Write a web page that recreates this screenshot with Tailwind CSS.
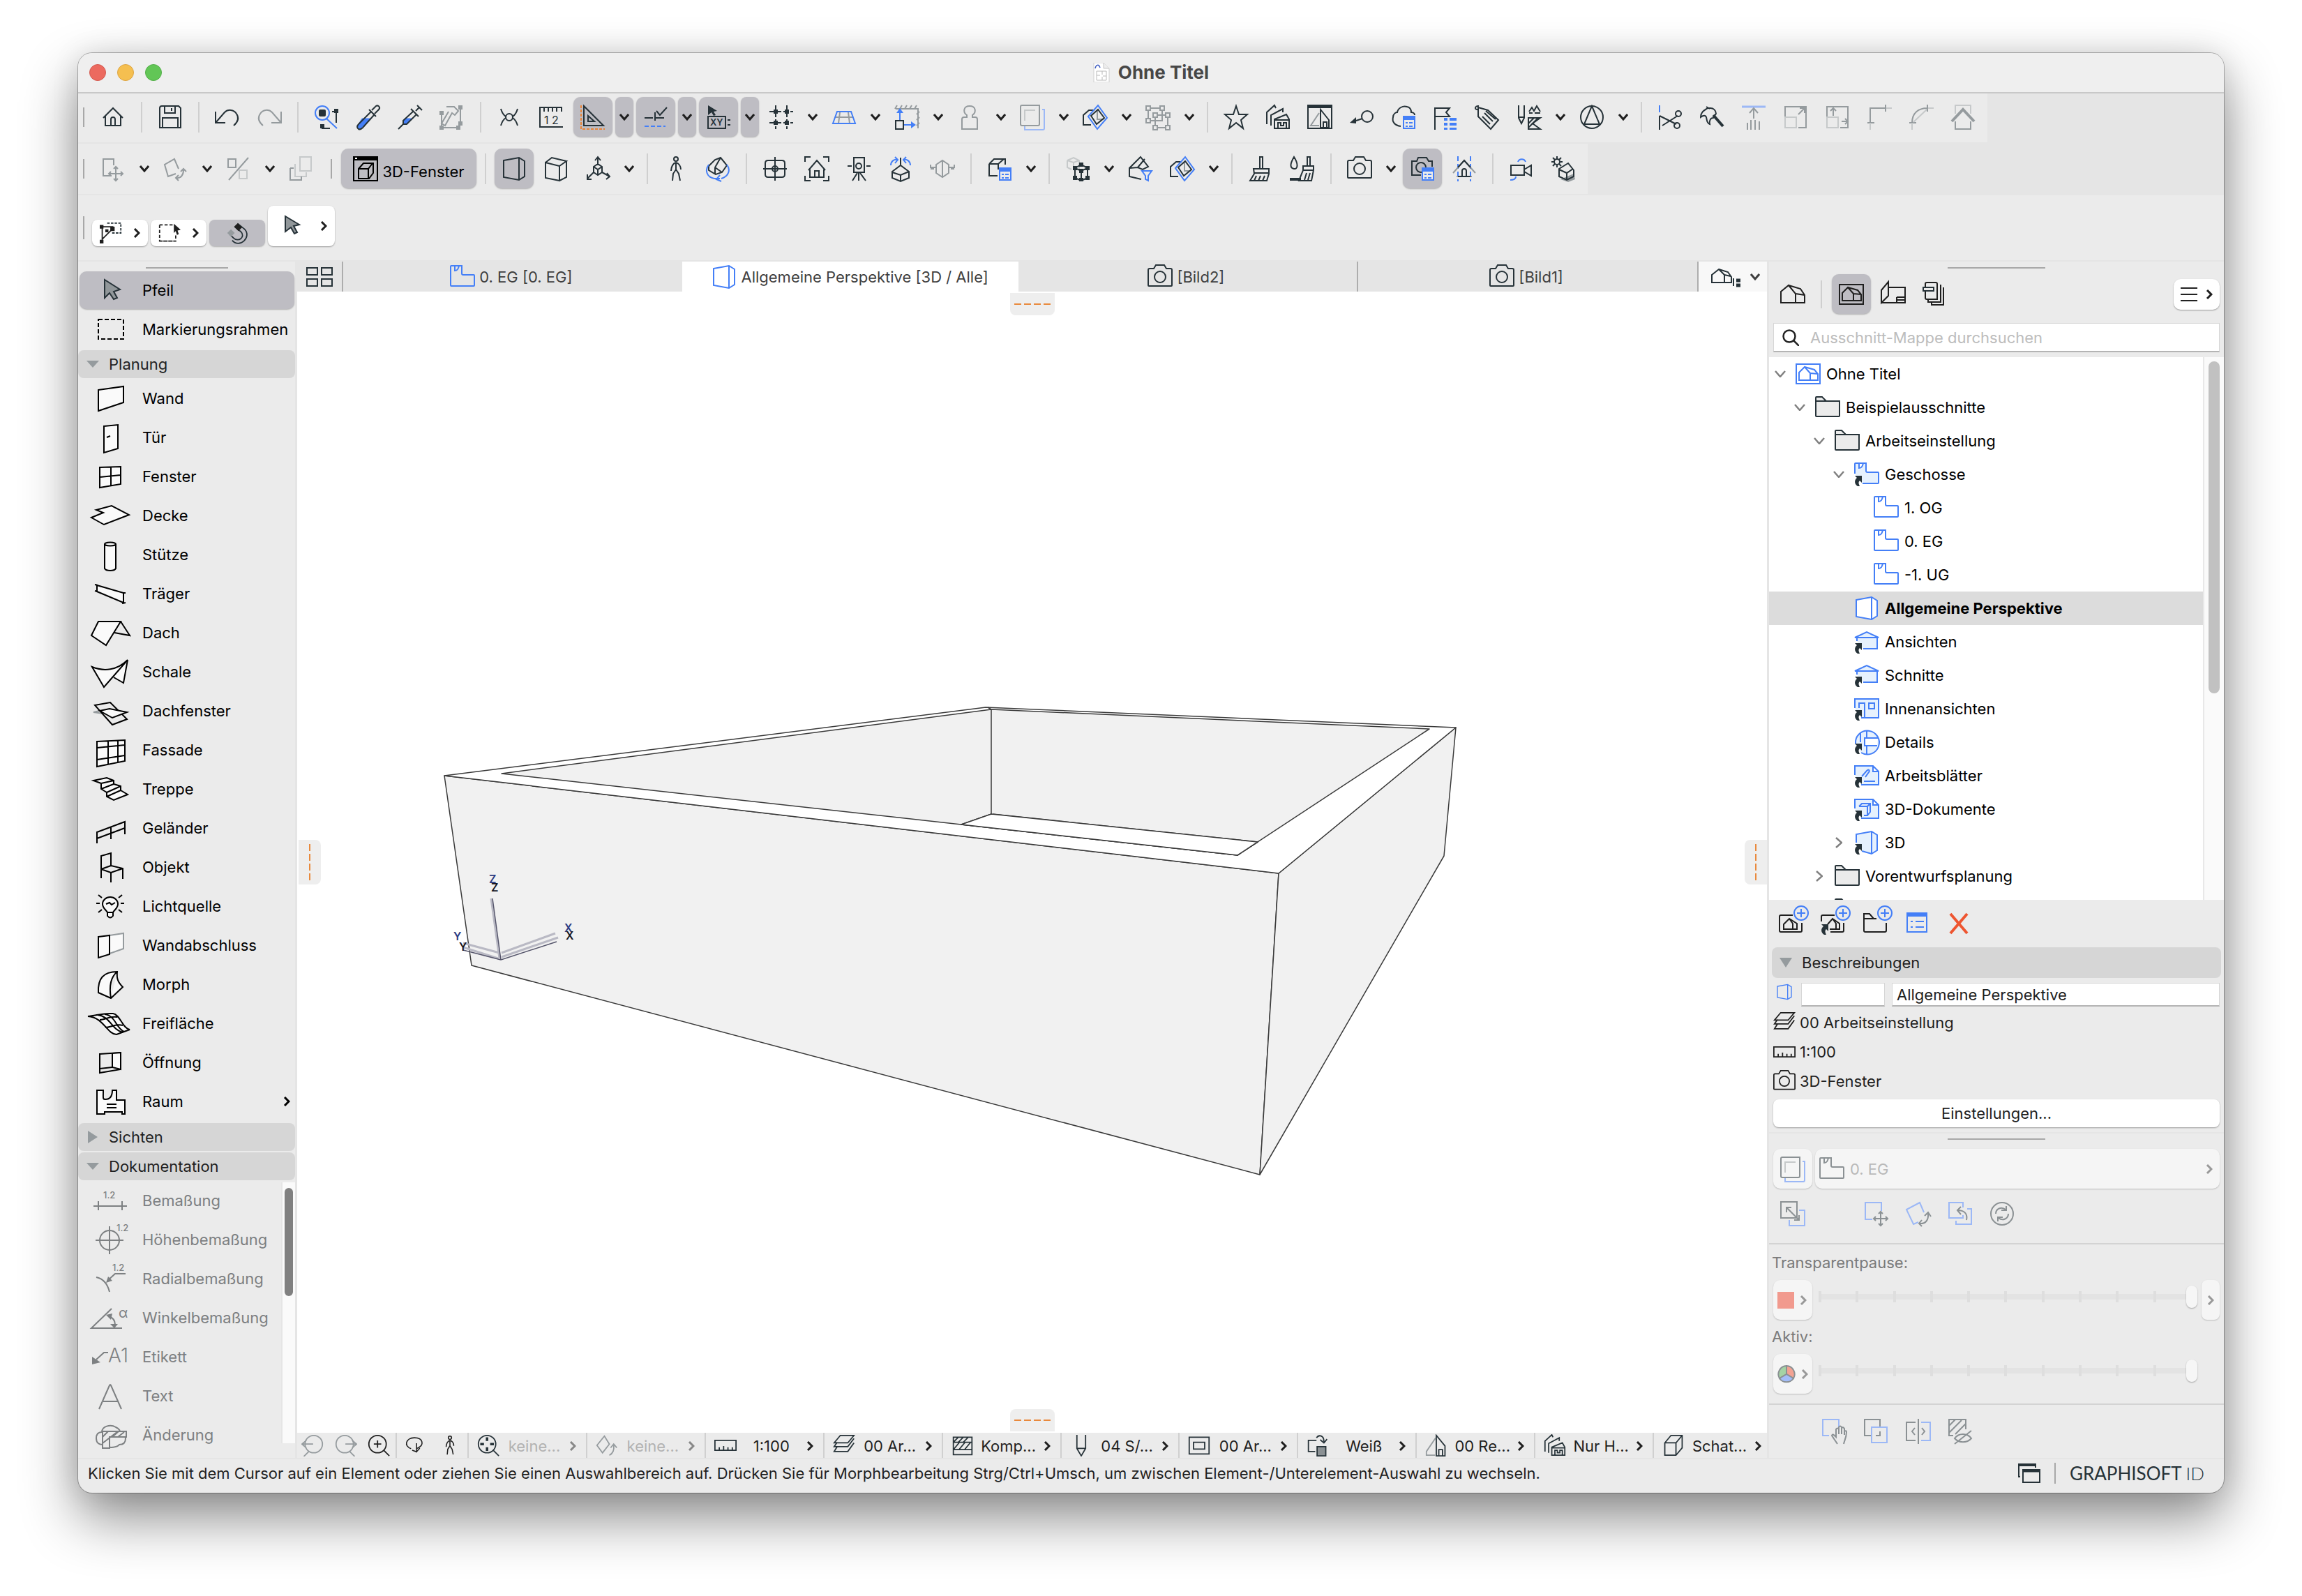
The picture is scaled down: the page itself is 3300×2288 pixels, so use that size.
<!DOCTYPE html>
<html lang="de">
<head>
<meta charset="utf-8">
<title>Ohne Titel</title>
<script src="https://cdn.jsdelivr.net/npm/@tailwindcss/browser@4"></script>
</head>
<body class="bg-white font-['Inter',sans-serif] text-[22px] leading-7 text-[#1f1f1f]">
<div class="min-h-screen px-28 pt-[76px] pb-[148px]">
<div class="flex flex-col overflow-hidden rounded-[20px] bg-[#ebebeb] shadow-[0_0_0_1px_rgba(0,0,0,0.28),0_36px_80px_rgba(0,0,0,0.46),0_0_40px_rgba(0,0,0,0.1)]">

  <header class="grid h-[58px] grid-cols-[1fr_auto_1fr] items-center border-b-2 border-[#c8c8c8] bg-[#efefef] px-4">
    <div class="flex gap-4">
      <button aria-label="Schließen" class="size-6 rounded-full border border-[#d35a50] bg-[#ec6a5f]"></button>
      <button aria-label="Minimieren" class="size-6 rounded-full border border-[#dca443] bg-[#f5bf50]"></button>
      <button aria-label="Vergrößern" class="size-6 rounded-full border border-[#53ae49] bg-[#62c656]"></button>
    </div>
    <h1 class="flex items-center gap-3 text-[26px] font-bold text-[#474747]">
      <svg class="h-7 w-6" viewBox="0 0 24 28" fill="none"><path d="M1 0h14l8 8v20H1z" fill="#fff" stroke="#cfcfcf"/><path d="M15 0v8h8" fill="#eee" stroke="#c4c4c4"/><path d="M3 8c1-5 5-7 7-1" stroke="#3c5bc0" stroke-width="1.5"/><path d="M5 12h14v13H5zM5 18h5m3-6v5m0 3v5m1-6h5" stroke="#b9b9b9"/></svg>
      Ohne Titel</h1>
  </header>

  <div class="flex flex-col items-start gap-0.5 bg-[#e5e5e5] pb-0.5">
    <div id="bar-main" role="toolbar" class="flex gap-1 bg-[#ebebeb] pt-[5px] pr-[7px] pb-2 pl-[7px]"></div>
    <div id="bar-3d" role="toolbar" class="flex gap-1 bg-[#ebebeb] pt-[7px] pr-[7px] pb-2 pl-[7px]"></div>
  </div>

  <div id="bar-info" class="flex h-[95px] items-end gap-1 border-b-2 border-[#e5e5e5] pb-5 pl-[7px]"></div>

  <div class="flex">
    <nav class="flex w-[314px] shrink-0 flex-col border-r-[3px] border-[#e5e5e5]">
      <div class="mx-auto mt-2 mb-1 h-0.5 w-[118px] bg-[#a8a8a8]"></div>
      <div id="tools-select"></div>
      <button class="mt-0.5 mb-px flex h-10 items-center gap-3.5 rounded-lg bg-[#d6d6d6] pl-3"><svg class="h-2.5 w-[18px]" viewBox="0 0 18 10"><path d="M0 0h18l-9 10z" fill="#959b9e"/></svg>Planung</button>
      <div id="tools-plan"></div>
      <button class="mt-[3px] flex h-10 items-center gap-3.5 rounded-lg bg-[#d6d6d6] pl-3"><svg class="h-[18px] w-[18px]" viewBox="0 0 18 18"><path d="M2 0l14 9-14 9z" fill="#959b9e"/></svg>Sichten</button>
      <button class="mt-0.5 mb-px flex h-10 items-center gap-3.5 rounded-lg bg-[#d6d6d6] pl-3"><svg class="h-2.5 w-[18px]" viewBox="0 0 18 10"><path d="M0 0h18l-9 10z" fill="#959b9e"/></svg>Dokumentation</button>
      <div class="flex pb-[5px]">
        <div id="tools-doc" class="min-w-0 flex-1"></div>
        <div class="mt-0.5 mb-4 w-5 border-l-2 border-[#e5e5e5] bg-[#fafafa] px-[3px] pt-2"><div class="h-[155px] w-3 rounded-full bg-[#808080]"></div></div>
      </div>
    </nav>

    <main class="flex min-w-0 flex-1 flex-col bg-white">
      <div class="flex h-[43px] bg-[#e5e5e5] text-[#3f3f3f]">
        <button aria-label="Tab-Übersicht" class="flex w-[66px] shrink-0 items-center justify-center border-r-2 border-[#adadad]"><svg class="h-7 w-10" viewBox="0 0 40 28" fill="none" stroke="#263238" stroke-width="2"><path d="M2 1h15v10H2zM23 1h15v10H23zM2 17h15v10H2zM23 17h15v10H23z"/></svg></button>
        <div id="tabs" role="tablist" class="flex min-w-0 flex-1"></div>
        <button aria-label="Tab-Optionen" class="flex w-[100px] shrink-0 items-center justify-center gap-3 border-l-2 border-[#adadad] bg-[#f8f8f8] pl-2" id="tab-menu"></button>
      </div>
      <div class="relative flex-1 overflow-hidden">
        <svg class="absolute inset-0 h-full w-full" viewBox="426 418 2107 1636" fill="#f1f1f1" stroke="#3a3a3a" stroke-width="1.5" stroke-linejoin="round">
          <path d="M637 1112L1833 1252 1806 1684 676 1384z"/>
          <path d="M1833 1252L2087 1043 2070 1227 1806 1684z"/>
          <path d="M637 1112L1413 1014 2087 1043 1833 1252z" fill="#fff"/>
          <path d="M719 1109L1421 1017 2049 1045 1774 1226z"/>
          <path d="M1421 1017V1167L1378 1182 1774 1226 1803 1207 1423 1167" fill="#f1f1f1"/>
          <path d="M1421 1167L1378 1182 1774 1226 1803 1207z" fill="#fff"/>
          <path d="M1421 1017L1416 1014" fill="none"/>
          <g fill="none" stroke="#b9b9c4" stroke-width="3"><path d="M716 1374L704 1288M719 1372L800 1344M719 1366L796 1338M714 1374L664 1358M716 1366L664 1352"/></g>
          <g fill="none" stroke="#55556b" stroke-width="1.5"><path d="M718 1376L706 1288M718 1376L798 1350M718 1376L664 1362"/></g>
          <g stroke="none" font-size="16" font-weight="600"><g fill="#2b3a80"><text x="701" y="1266">Z</text><text x="809" y="1336">X</text><text x="650" y="1348">Y</text></g><g fill="#15151f"><text x="704" y="1278">Z</text><text x="811" y="1347">X</text><text x="658" y="1363">Y</text></g></g>
        </svg>
        <div class="absolute top-0.5 left-1/2 flex h-8 w-16 -translate-x-1/2 items-center justify-center gap-1 rounded-b-lg bg-[#eee]" data-handle="h"></div>
        <div class="absolute bottom-0.5 left-1/2 flex h-8 w-16 -translate-x-1/2 items-center justify-center gap-1 rounded-t-lg bg-[#eee]" data-handle="h"></div>
        <div class="absolute top-1/2 left-0.5 flex h-16 w-8 -translate-y-1/2 flex-col items-center justify-center gap-1 rounded-r-lg bg-[#eee]" data-handle="v"></div>
        <div class="absolute top-1/2 right-0 flex h-16 w-8 -translate-y-1/2 flex-col items-center justify-center gap-1 rounded-l-lg bg-[#eee]" data-handle="v"></div>
      </div>
      <div id="quick" class="flex h-9 bg-[#ebebeb]"></div>
    </main>

    <aside class="flex w-[655px] shrink-0 flex-col border-l-[3px] border-[#e5e5e5]">
      <div class="mx-auto mt-2 h-0.5 w-[140px] bg-[#a8a8a8]"></div>
      <div id="nav-head" class="mt-2 flex h-[57px] items-center gap-1 pr-1.5 pl-1.5"></div>
      <label class="mx-1.5 mt-[13px] flex h-[42px] items-center gap-4 border border-b-2 border-[#d6d6d6] border-b-[#b4b4b4] bg-white pl-3">
        <svg class="size-6" viewBox="0 0 24 24" fill="none" stroke="#222" stroke-width="2.5"><circle cx="10" cy="10" r="8.5"/><path d="M16 16l8 8"/></svg>
        <input type="search" aria-label="Ausschnitt-Mappe durchsuchen" placeholder="Ausschnitt-Mappe durchsuchen" class="min-w-0 flex-1 bg-transparent outline-none placeholder:text-[#bdbdbd]">
      </label>
      <div class="mt-[7px] flex h-[778px]">
        <div id="tree" role="tree" class="min-w-0 flex-1 overflow-hidden bg-white text-black"></div>
        <div class="w-[30px] border-l-2 border-[#e8e8e8] bg-[#fafafa] px-1.5 pt-1.5"><div class="h-[476px] w-4 rounded-full bg-[#c1c1c1]"></div></div>
      </div>
      <div id="nav-tools" class="flex h-[66px] items-center pl-0.5"></div>
      <button class="mx-1 mt-0.5 flex h-11 items-center gap-3.5 rounded-lg bg-[#d6d6d6] pl-[11px]"><svg class="h-3.5 w-[18px]" viewBox="0 0 18 14"><path d="M0 0h18l-9 14z" fill="#959b9e"/></svg>Beschreibungen</button>
      <div class="mx-1.5 mt-[7px] flex h-[34px] items-center gap-2.5">
        <span data-icon="persp" class="w-[30px] pb-2 pl-1 text-[#447ff7] [&>svg]:size-6"></span>
        <input aria-label="Kennung" class="h-full w-[120px] border border-b-2 border-[#d6d6d6] border-b-[#b4b4b4] bg-white px-1.5">
        <input aria-label="Name" value="Allgemeine Perspektive" class="h-full min-w-0 flex-1 border border-b-2 border-[#d6d6d6] border-b-[#b4b4b4] bg-white px-1.5">
      </div>
      <div class="mt-0.5 pl-1.5">
        <div class="flex h-[42px] items-center gap-1.5"><span data-icon="layers" class="[&>svg]:size-8"></span>00 Arbeitseinstellung</div>
        <div class="flex h-[42px] items-center gap-1.5"><span data-icon="ruler" class="[&>svg]:size-8"></span>1:100</div>
        <div class="flex h-[42px] items-center gap-1.5"><span data-icon="camera" class="[&>svg]:size-8"></span>3D-Fenster</div>
      </div>
      <button class="mx-1.5 mt-[5px] h-10 rounded-lg bg-white shadow-[0_1px_2px_rgba(0,0,0,0.35)]">Einstellungen...</button>
      <div class="mt-[7px] h-0.5 bg-[#e5e5e5]"></div>
      <div class="mx-auto mt-[7px] h-0.5 w-[140px] bg-[#a8a8a8]"></div>
      <div class="mx-1.5 mt-[13px] flex h-[57px] gap-1">
        <button disabled aria-label="Transparentpause" class="flex w-14 items-center justify-center rounded-[10px] bg-[#f5f5f5] shadow-[0_1px_2px_rgba(0,0,0,0.2)]" data-icon="trace"></button>
        <label class="flex flex-1 items-center gap-2 rounded-[10px] bg-[#f5f5f5] pr-2.5 pl-1.5 text-[#8b9194] shadow-[0_1px_2px_rgba(0,0,0,0.2)]"><span data-icon="storey"></span>
          <select disabled aria-label="Referenz" class="flex-1 appearance-none text-[#b9b9b9]"><option>0. EG</option></select><span data-chev="r" class="text-[#999]"></span></label>
      </div>
      <div id="trace-tools" class="flex h-[72px] items-center pl-1 text-[#8b9194]"></div>
      <div class="mt-1.5 h-0.5 bg-[#d3d3d3]"></div>
      <div id="sliders" class="mt-2"></div>
      <div class="mt-3.5 h-0.5 bg-[#d3d3d3]"></div>
      <div id="trace-foot" class="flex h-[76px] items-center pl-16 text-[#8b9194]"></div>
    </aside>
  </div>

  <footer class="flex h-[50px] items-center border-t-2 border-[#e5e5e5] pr-7 pl-3.5">
    <p class="flex-1 pb-2">Klicken Sie mit dem Cursor auf ein Element oder ziehen Sie einen Auswahlbereich auf. Drücken Sie für Morphbearbeitung Strg/Ctrl+Umsch, um zwischen Element-/Unterelement-Auswahl zu wechseln.</p>
    <div class="flex items-center gap-5 pb-2">
      <svg class="h-7 w-8" viewBox="0 0 32 28" fill="none" stroke="#263238" stroke-width="2"><path d="M3 19H1V1h24v5"/><path d="M1 2.5h24" stroke-width="3"/><path d="M7 9h24v18H7z"/><path d="M7 10.500h24" stroke-width="4"/></svg>
      <div class="h-[30px] w-0.5 bg-[#a8a8a8]"></div>
      <a href="#" class="font-['Lato',sans-serif] text-[26px] text-[#263238]">GRAPHISOFT <span class="font-light">ID</span></a>
    </div>
  </footer>
</div>
</div>

<script>
const K = '#263238', G = '#959b9e', L = '#c6c9ca', B = '#447ff7', LB = '#9cb8f6', O = '#ea8437', C = 'currentColor', W = '#fafafa', F = '#e6f1fd';
const p = (d, s = C, f = 'none', w = 2) => `<path d="${d}" stroke="${s}" fill="${f}" stroke-width="${w}"/>`;
const circ = (x, y, r, s = C, f = 'none') => `<circle cx="${x}" cy="${y}" r="${r}" stroke="${s}" fill="${f}" stroke-width="2"/>`;
const solid = (d, f = C) => p(d, 'none', f);
const txt = (x, y, size, t, w = 500) => `<text x="${x}" y="${y}" font-size="${size}" font-weight="${w}" fill="currentColor">${t}</text>`;
const shortcut = solid('M5 35c-5-3-5-9-1-12l-3-3h10v10l-3-3c-2 2-2 4 0 8z', K);
const listBadge = p('M18 17h16v17H18z', B, '#ebebeb') + solid('M18 16h16v6H18z', B) + p('M21 26h3m2 0h5M21 31h3m2 0h5', B);
const plus = circ(32, 4, 10, B, '#ebebeb') + p('M32-2v12M26 4h12', B);

const icons = {
  home: p('M4 19L18 5l14 14M7 16v14h22V16M15 30v-9a3 3 0 0 1 6 0v9'),
  save: p('M3 5q0-3 3-3h24l3 3v28H3zM10 3v9h15V3M20 5v4M7 33V19h22v14'),
  undo: p('M1 10v16h14M1 26L14 11a11 11 0 0 1 17 2c4 6 2 12-4 17'),
  redo: p('M35 10v16H21M35 26L22 11a11 11 0 0 0-17 2c-4 6-2 12 4 17', G),
  find: circ(12, 12, 10, B) + p('M18 20l15 14', B) + solid('M7 9q0-2 2-2h6q2 0 2 2v6q0 2-2 2H9q-2 0-2-2z', K) + p('M26 10h6M32 9v17M12 29v5h11', K) + solid('M29 6h6v6h-6zM9 28h6v6H9z', K),
  dropper: p('M9 20h12L8 33c-2 2-6 1-6-2z', B, B, 1) + p('M23 8l6-6c3-2 7 2 4 5l-6 6M19 7l10 10M22 10L4 28c-3 3-2 6 0 7s4 0 6-2l16-18'),
  syringe: p('M10 20h11l-8 8H8v-5z', B, B, 1) + p('M28 1l7 7M31 4l-5 5M19 6l11 11M23 9L8 23v5h5l14-14M8 28l-7 7'),
  hammer: p('M10 3h11l6 6-5 6-4-3-10 18-5-3 10-17M30 3v27M3 12v21h26', G) + solid('M27 1h6v6h-6zM27 24h6v6h-6zM0 9h6v6H0zM0 30h6v6H0zM24 30h6v6h-6z', G),
  snap: p('M6 6c2 7 4 9 7 11M30 6c-2 7-4 9-7 11M6 30c2-7 4-9 7-11M30 30c-2-7-4-9-7-11') + circ(18, 18, 5),
  ruler12: p('M2 32V4h32M35 32H1M8 4v6M14 4v6M20 4v6M26 4v6M33 4v6') + `<text x="8" y="28" font-size="16" fill="${K}">1 2</text>`,
  setsq: p('M5 2v28h28zM11 16v8h9z') + p('M1 1v34h34', O).replace('/>', ' stroke-dasharray="4 2"/>'),
  guide: p('M2 19h12m4 0h12M17 11v12M19 9l5 6L34 4') + p('M2 31h30', B).replace('/>', ' stroke-dasharray="6 3"/>'),
  track: p('M3 17h25v17H3zM31 22h4M31 29h4') + solid('M3 1l13 8-5 1 3 5-3 1-3-5-5 4z') + `<text x="6" y="30" font-size="13" font-weight="600" fill="${K}">XY</text>`,
  grid: p('M10 1v34M26 1v34M1 10h34M1 26h34').replace('/>', ' stroke-dasharray="7 3"/>') + solid('M7 7h6v6H7zM23 7h6v6h-6zM7 23h6v6H7zM23 23h6v6h-6z'),
  skew: p('M12 11l-2 16M24 11l2 16M6 18h24', G) + p('M8 10h20l6 17H2z', B),
  measure: p('M2 6h32v28', G) + p('M4 1l-3 5M11 1L8 6M18 1l-3 5M25 1l-3 5M32 1l-3 5M36 10l-4 4M36 18l-4 4M36 26l-4 4', G) + p('M2 23h11v12H2z', K) + p('M8 22V10M14 29h12', B) + solid('M3 12l5-7 5 7zM24 24l7 5-7 5z', B),
  stamp: p('M14 15c-6-4-5-13 4-13s10 9 4 13v3h4q3 0 3 3v14H7V21q0-3 3-3h4z', G),
  ref: p('M1 3q0-2 2-2h25v27q0 2-2 2H3q-2 0-2-2z', G) + p('M7 23V8h15', L) + p('M32 7h3v27q0 2-2 2H7v-5', LB),
  trace: p('M1 3q0-2 2-2h25v27q0 2-2 2H3q-2 0-2-2z', '#8b9194') + p('M7 23V8h15', L) + p('M32 7h3v27q0 2-2 2H7v-5', LB),
  cut3d: p('M21 8v13h9', G) + p('M12 29H1V15L9 8h8') + p('M12 16L22 7l9 12-11 9z') + p('M8 17L22 1l13 18-14 16z', B),
  group: p('M4 5h20v18H4z', G) + p('M14 15h18v18H14z', G) + p('M1 2h6v6H1zM21 2h6v6h-6zM1 20h6v6H1zM11 12h6v6h-6zM29 12h6v6h-6zM11 30h6v6h-6zM29 30h6v6h-6z', G, '#ebebeb'),
  star: p('M18 2l4 12h12l-9 8 3 12-10-8-10 8 3-12-9-8h12z'),
  hoods: p('M2 28V11L13 1l2 4M8 30V15L25 6v5M13 34V21l17-7 4 7v13zM13 22h21M18 34v-8h4v4h4v-4h4v8'),
  elev: p('M1 2h34v32H1z') + solid('M0 0h36v5H0z') + p('M19 7v26h12V22z') + p('M17 12L5 30h12', G) + p('M23 33v-8h5v8'),
  marker: circ(26, 17, 8) + p('M19 20L4 25') + solid('M1 26l9-8 0 9z'),
  cloud: p('M14 31C6 30 1 25 3 18c0-5 4-7 6-7 1-6 8-10 14-8 5 1 6 5 6 8 3 0 5 2 5 4') + listBadge,
  flag: p('M3 36V5h21l-5 6 5 6H3') + solid('M16 19h5v4h-5zM24 19h10v4H24zM16 26h5v4h-5zM24 26h10v4H24zM16 33h5v3h-5zM24 33h10v3H24z', B),
  tag: p('M5 4l14 4 15 14-11 13L5 17zM5 7C-1 8 0 1 6 2M14 12l12 12M11 17l11 11M16 9l14 12'),
  penset: p('M3 1v18l4 8 4-8V1M3 18h8M18 10l4-6 3 5 4-7 5 8M18 12h5m3 0h8') + p('M17 35V19h17l-11 8 11 8z') + p('M17 27l8-8M17 33l14-14'),
  north: circ(18, 18, 16) + p('M18 2L7 28h22z'),
  scissor: p('M3 1v10', B) + p('M3 16v20M3 16l24 12M7 30l22-14') + circ(30, 13, 4) + circ(28, 30, 4),
  axe: p('M12 5c-6 4-10 6-10 13 4-3 7-3 8 0s0 8 5 10c-1-5 1-9 5-9l4-6c0-5-4-8-8-8zM10 3l5 3') + p('M20 15l14 16', K, 'none', 4),
  lift: p('M1 3h34', LB, 'none', 3) + p('M18 20V6M12 12l6-7 6 7M9 26v10M14 22v14M20 22v14M26 24v12', G),
  resize: p('M3 17V3h30v30H22M22 14l8-8M24 5h7v7', G) + p('M3 18h16v15H3z', L),
  stretch: p('M3 17V3h30v30H22M12 16V5M8 9l4-4 4 4M24 24h9M29 20l4 4-4 4', G) + p('M3 18h16v15H3z', L),
  corner: p('M5 26V5h22M27 0v10M1 26h10', G) + p('M5 28v8M28 5h8', L),
  fillet: p('M5 26C5 12 14 5 27 5M27 0v10M1 26h10', G) + p('M5 28v8M28 5h8M7 25L26 7', L),
  roof: p('M7 24v11h22V24', G) + p('M7 13V1h22v12', L) + p('M2 24L18 7l16 17', G, 'none', 4),

  move: p('M16 28H4V4h15v9', G) + p('M22 15v20M12 25h20M19 18l3-3 3 3M19 32l3 3 3-3M15 22l-3 3 3 3M29 22l3 3-3 3', G),
  rotate: p('M18 25l-11 4L2 12 16 4l6 14', G) + p('M19 31c6 1 10-4 10-11M25 22l4-4 4 4M22 27l-4 4 4 4', G),
  scale: p('M3 4h11v12H3zM32 2L4 34', G) + p('M19 20h11v12H19z', L),
  copies: p('M16 1h16v20H16z', L) + p('M10 12h-1v17h16v-6', L) + p('M2 17v17h16v-5M2 17h5', G),
  win3d: p('M1 1h34v34H1z') + solid('M0 0h36v6H0z') + solid('M3 2h3v2H3z', '#fff') + p('M8 18l7-8h14v14l-6 8H8zM8 18h14v13M22 18l6-8'),
  persp: p('M3 6L25 2l8 5v22l-8 5L3 30zM25 2v32'),
  axon: p('M3 9v22l20 4V14zM3 9l9-7 21 5-10 7M23 35l10-5V7'),
  axes: p('M18 2v10M14 6l4-5 4 5M12 15l6-4 6 4v8l-6 4-6-4zM12 15l6 4 6-4M18 19v8M12 23L3 32M3 26v7h6M24 23l11 6M30 33l5-4-4-5'),
  walk: circ(18, 4, 3) + p('M18 9c-4 1-7 6-7 12M18 9c4 1 7 5 7 10M18 9v10l-4 6-1 10M18 19l4 6 2 10'),
  orbit: p('M5 14l9-9 8-3 9 11-7 10-9 3-10-6zM14 16l8-14M14 16l10 7M14 16v10') + p('M5 12c-6 8-3 18 8 20h8M31 12c6 8 2 17-8 20M21 27l-5 6 7 3', B),
  compass: p('M18 1v34M1 18h34M4 10q0-4 4-4h20q4 0 4 4v16q0 4-4 4H8q-4 0-4-4z') + circ(18, 18, 4),
  fit: p('M1 8V1h8M27 1h8v7M35 28v7h-8M9 35H1v-7M6 20L18 6l12 14M8 17v13h20V17M15 30v-9h6v9'),
  tripod: p('M11 2h15v21H11zM2 14h6M29 14h6M18 23v12M16 24L9 35M20 24l8 11') + circ(18, 14, 4),
  fly: p('M6 22l12-9 12 9v9l-12 5-12-5zM6 23l12 4 12-5M18 27v8') + p('M4 13c0-6 5-9 9-8M10 1l4 4-4 5M32 13c0-6-5-9-9-8M26 1l-4 4 4 5', B) + p('M18 2v10'),
  clip: p('M9 12l9-6 9 6v12l-9 6-9-6zM18 6v24M1 12v4h7M35 12v4h-7M1 18h5M35 18h-5', G),
  boxlist: p('M3 11l7-7h16v8M3 11v17h12M3 11h13l8-7M16 11v8') + listBadge,
  structs: p('M3 6l9-4 8 4v12M3 6v10l6 3M3 6l9 3 8-3M12 9v6', L) + p('M14 17l9-5 9 5v14l-9 4-9-4zM14 17l9 4 9-4M23 21v14') + solid('M11 14h6v6h-6zM20 9h6v6h-6zM29 14h6v6h-6zM20 18h6v6h-6zM11 28h6v6h-6zM20 31h6v5h-6zM29 28h6v6h-6z'),
  filter: p('M19 33L2 29V17L18 1l11 14-8 4-7-3L2 17M14 16L24 4') + p('M20 21h14l-5 7v7l-4-2v-5z', B, '#ebebeb'),
  brush: p('M17 1h4v17h-4zM8 18h22v7L27 35H3l6-10zM9 24h21M12 28l-3 7M18 28l-3 7M24 28l-3 7'),
  brushdrop: p('M6 1c-7 12-5 16 0 17s7-6 0-17zM25 1h4v13h-4zM19 14h15v6l-3 15H13l6-15zM19 20h15M24 24l-3 10M29 24l-3 10') + p('M0 33h16', K, 'none', 4),
  camera: p('M1 8q0-2 2-2h6l3-5h12l3 5h6q2 0 2 2v22q0 1-1 1H2q-1 0-1-1z') + circ(18, 18, 8),
  camlist: p('M16 27H3V7h7l2-5h12l3 5h5v8') + circ(16, 16, 7) + listBadge,
  housedash: p('M9 0v36M27 0v36', B).replace('/>', ' stroke-dasharray="7 4"/>') + p('M2 24L18 6l16 18M7 29h22', G) + p('M9 16L18 6l9 10M9 29h18M15 29v-8a3 3 0 0 1 6 0v8'),
  video: p('M3 13h19v14H3zM22 19l10-6v15l-10-6z') + p('M13 8c2-5 9-5 11 0M2 34c5 0 8-2 8-5', B),
  sun: solid('M14 33l19-8 2 8-10 4z', G) + p('M12 18l13-8 8 10v9l-10 5-11-5zM12 19l11 5 9-6M23 24v10') + circ(9, 8, 4) + p('M9 0v3M9 13v3M1 8h3M14 8h3M3 2l3 3M12 11l3 3M3 14l3-3M12 5l3-3'),

  drag: p('M2 8h20M4 8v24M4 28l16-16') + p('M12 2h22v16H18', K).replace('/>', ' stroke-dasharray="4 2"/>') + solid('M0 5h6v6H0zM0 29h6v6H0zM17 8h7v7h-7zM9 12h5v5H9z'),
  boxsel: p('M2 5h22M2 5v26h26V20M2 31h26').replace('/>', ' stroke-dasharray="5 3"/>') + solid('M25 3l11 10-5 1 2 6-3 1-2-6-3 3z'),
  magnet: p('M14 8L24 16c8 8-4 18-12 10L6 20M19 3l11 9c12 12-8 32-20 18', K) + solid('M13 8l6-6 7 7-6 6z') + solid('M2 18l6-6 6 6-6 6z', G),
  arrow: p('M10 4l20 12-8 2 5 9-4 2-5-9-8 6z', K, '#91979a'),

  house3: p('M1 14L12 5l10 12v13H1zM12 5l17 5 6 9v11H22M22 17l13 2'),
  viewmap: p('M1 4h34v28H1z') + p('M5 16l8-8 8 9v10H5zM13 8l14 4 5 6v9H21M21 17l11 1'),
  layout: p('M1 12L11 0v20L1 30zM12 8h23v22H1M23 22h12M23 26h12M23 22v8'),
  publish: p('M4 11v12q0 2 2 2h15V3q0-2-2-2H6q-2 0-2 2zM25 5h1v24H8v-3M29 9h1v24H13v-3') + p('M1 8h15v5H1z', K, '#ebebeb'),
  storey: p('M2 2h15v11q0 2 2 2h15q1 0 1 1v14q0 1-1 1H2q-1 0-1-1V3q0-1 1-1zM7 2v7c4 0 5-3 6-7'),
  storeyF: p('M1 17V3q0-1 1-1h15v11q0 2 2 2h15q1 0 1 1v14q0 1-1 1H12M7 2v7c4 0 5-3 6-7', B, F) + shortcut,
  folder: p('M1 9V4q0-1 1-1h8l6 6M1 9h34v21q0 1-1 1H2q-1 0-1-1z', K, '#ebebeb'),
  perspW: p('M3 6L25 2l8 5v22l-8 5L3 30zM25 2v32', B, '#fff'),
  perspF: p('M3 18V6L25 2l8 5v22l-8 5-14-4M25 2v32', B, F) + shortcut,
  section: p('M4 17v-5h29v16H13', B, F) + p('M1 12L18 4l17 8z', B, F) + shortcut,
  interior: p('M1 17V4h34v27H10M7 17v-7h8v20M21 10h8v8h-8z', B, F) + shortcut,
  detail: p('M2 20A17 17 0 1 1 10 33M9 4v14M18 1v11M18 24v11M34 12H15v11h18', B, F) + shortcut,
  sheet: p('M1 17V4h26l8 8v19H10M27 4v8h8M11 19l7-8c3-3 5 0 3 2l-5 7M14 26h16', B, F) + shortcut,
  doc3d: p('M1 17V4h26l8 8v19H10M27 4v8h8M7 14l4-4h12v12l-4 5h-5M7 14h12v12M19 14l4-4', B, F) + shortcut,

  addview: p('M20 7H3q-2 0-2 2v20q0 2 2 2h28q2 0 2-2V18') + p('M7 20l8-8 11 7v8H7zM15 12l5 7v8') + plus,
  addclone: p('M1 16V9q0-2 2-2h17M14 31h17q2 0 2-2V18') + p('M10 20l7-8 10 7v8H13M17 12l5 7v8') + shortcut + plus,
  addfolder: p('M20 12H2V5h8l6 7M2 12v17q0 2 2 2h28q2 0 2-2V18') + plus,
  settings: p('M4 4h28v27H4z', B) + solid('M3 3h30v6H3z', B) + p('M9 16h3m4 0h12M9 24h3m4 0h12', B),
  del: p('M6 5l24 28M30 5L6 33', '#ee5530', 'none', 4),
  layers: p('M12 2h22L24 14H2zM7 13l-5 7h22l10-13M7 20l-5 8h22l10-14'),
  ruler: p('M1 10h34v16H1zM8 26v-5M15 26v-7M22 26v-5M29 26v-5'),

  swap: p('M1 1h23v23H1zM9 9l18 18M9 16V9h7M20 27h7v-7') + p('M27 13h8v22H13v-8', LB),
  tmove: p('M12 26H2V2h23v12', LB) + p('M24 15v20M14 25h20M21 18l3-3 3 3M21 32l3 3 3-3M17 22l-3 3 3 3M31 22l3 3-3 3'),
  trot: p('M18 30l-7 3L1 12 20 2l6 14', LB) + p('M20 32c8 1 13-5 12-14M27 21l5-5 4 6M23 27l-4 5 4 4'),
  trest: p('M22 9V2H2v22h20v-4M28 11h6v22H12v-5', LB) + p('M27 27c2-9-3-14-13-14M19 8l-5 5 5 6'),
  refresh: circ(18, 18, 16) + p('M9 18c0-7 8-11 14-6M24 7v6h-7M27 18c0 7-8 11-14 6M12 29v-6h7'),
  hand: p('M10 24H1V1h23v11', LB) + p('M22 36l-8-12c1-3 3-1 6 2V15q2-3 4 0v7V12q2-3 4 0v10V13q2-2 4 1v9-5q3-2 3 1c0 8-3 12-4 17'),
  overlap: p('M11 24H1V1h22v11') + p('M11 12h22v22H11z', LB) + p('M17 24h6v-6'),
  split: p('M14 5H1v26h13M18 0v36M13 13l-4 5 4 5M23 13l4 5-4 5') + p('M22 5h13v26H22', LB),
  hatchoff: p('M8 24H2V1h24v14M2 10l9-9M2 20L20 2M11 22L26 7M10 28c6-8 18-8 24 0-6 7-18 7-24 0zM10 36l24-19'),

  zback: circ(20, 16, 14, G) + p('M1 16h18M8 10l-7 6 7 6M12 28l-8 8', G),
  zfwd: circ(16, 16, 14, G) + p('M35 16H17M28 10l7 6-7 6M24 28l8 8', G),
  zoom: circ(16, 16, 14) + p('M26 26l9 9M16 10v12M10 16h12'),
  spin: p('M12 24C-2 20 2 4 18 4s20 14 4 20M22 14v16l-8-3M22 30l6-7'),
  fitzoom: circ(16, 16, 14) + p('M26 26l9 9') + p('M16 5v6M16 21v6M5 16h6M21 16h6', K, 'none', 4),
  orient: p('M2 18L14 3l8 13-11 14z', G) + p('M22 34c6-3 8-8 7-16M24 22l5-6 5 6', G),
  hatch: p('M3 5h30v28H3zM3 25h30M3 13h30M3 13l8-8M11 13l8-8M19 13l8-8M3 25l10-12M12 25l10-12M21 25l10-12'),
  pen: p('M11 1v22l7 12 7-12V1M11 23h14'),
  dimbox: p('M2 5h32v27H2zM9 13h18v11H9z'),
  override: p('M14 28H3V10h13') + p('M16 6c4-6 12-4 12 6M22 9l6 5 5-6') + p('M17 20h14v15H17z', K, '#8b9194'),
  reno: p('M18 2v33h14V19zM22 34v-9h6v9') + p('M17 6L2 28v6h14', G),
  box3d: p('M4 14L14 2h18v20L22 34H4zM4 14h18v20M22 14L32 2'),

  tArrow: p('M22 9l22 14-9 3 5 9-5 2-6-9-7 7z', K, '#91979a'),
  tFrame: p('M13 10h36v28H13z').replace('/>', ' stroke-dasharray="6 3"/>'),
  wall: p('M13 12L49 7v23L13 42z', C, W),
  door: p('M21 8L41 6v34l-20 6zM25 24l5-2', C, W),
  window: p('M15 11l30-1v25l-30 5zM31 10v27M15 25l30-3', C, W),
  slab: p('M10 16l22-6 25 13-36 14L3 27l17-7z', C, W),
  column: p('M22 9v35c2 4 14 4 16 0V9', C, W) + `<ellipse cx="30" cy="9" rx="8" ry="2.500" fill="${W}" stroke="currentColor" stroke-width="2"/>`,
  beam: p('M11 12l38 11v14L11 21z', C, W) + p('M8 11l4 1M8 20l4 1M47 38l5-1M48 23h4'),
  roofT: p('M45 8l13 20-22-4') + p('M13 8h32L24 42 3 28z', C, W),
  shell: p('M55 7l-6 33-14-8', C, W) + p('M4 17c17 7 36 5 51-10L21 46z', C, W),
  skylight: p('M15 24l-9 2 14 2', G) + p('M8 16l22-4 24 24-21 8z') + p('M15 24l14-3 25 5-21 8z', C, W),
  facade: p('M11 12l40-2v30l-40 8zM27 11v33M41 10v32M11 21l40-4M11 38l40-6', C, W),
  stair: p('M6 12l19-4 10 4v5l10 3v6l10 6-20 8-10-5v-6l-8-5v-8zM17 16l18-4M17 24l18-7M25 29l20-9M25 35l20-9', C, W),
  rail: p('M11 46V30l40-15v18M31 22v18M11 39l40-15'),
  chair: p('M17 40V8l14-4v18l17 4v15M17 27l14-5M17 27l14 5 17-6M31 32v14'),
  bulb: p('M26 33c-2-4-7-6-7-12a11 10 0 0 1 22 0c0 6-5 8-7 12zM26 33v5q4 5 8 0v-5M24 21l5-2 3 3 5-3', C, W) + p('M10 20h5M45 20h5M13 8l5 4M47 8l-5 4M13 33l5-4M47 33l-5-4'),
  wallend: p('M29 10l20-3v22l-20 7', G, W) + p('M13 12l16-2v27l-16 5z', C, W),
  morph: p('M13 36C12 16 20 6 40 6c-1 10 1 15 8 22L31 44zM40 6c-12 10-11 26-9 38', C, W),
  mesh: p('M-2 14c12-1 22-5 36-4 10 1 14 22 24 23l-19 7C26 40 20 15-2 14zM15 19c8 0 14-6 25-4M23 30c8 0 14-6 25-3', C, W) + p('M12 12c18 2 20 21 36 25M22 11c16 2 16 20 28 25'),
  opening: p('M15 12l30-2v24l-30 5z', C, '#ebebeb') + p('M33 11l12-1v24l-12-3z', C, W) + p('M15 33l18-2'),
  room: p('M11 8h9v3c0 8-1 10 3 10 7 0 10-5 10-13h6v14h12v20h-4v-3H22v3H11zM25 28h14M25 33h14', C, W),
  dim: p('M6 32h48M13 25v13M47 25v13') + txt(20, 21, 13, '1.2'),
  level: circ(29, 25, 14) + p('M9 25h40M29 5v40') + txt(39, 12, 13, '1.2'),
  radial: p('M10 22c10 2 16 9 19 21M52 17H37L26 27') + solid('M24 30l3-9 6 6z') + txt(33, 13, 13, '1.2'),
  angle: p('M32 11L3 39h44M28 22c6 2 9 6 9 12') + solid('M24 20l9-2-2 9zM30 33h11l-5 6z') + txt(42, 24, 20, 'α', 400),
  labelT: p('M27 18h-6L10 28') + solid('M4 24l12 8-12 3z') + txt(27, 32, 28, 'A1', 300),
  textT: p('M14 43L29 9q1-2 2 0l15 34M20 32h21'),
  change: p('M19 38c-4 0-9-2-9-9 0-6 3-9 8-9 0-8 12-12 20-7 6 3 6 5 6 8 5 0 8 4 8 8 0 8-6 9-9 9-2 3-14 7-22 0') + p('M19 19h34v8H29v16H19zM19 27l8-8M19 36l22-17M33 27l9-8M41 27l9-7', C, '#ebebeb')
};
const svg = (n, box = '0 0 36 36', cls = 'size-9 shrink-0 overflow-visible') => `<svg class="${cls}" viewBox="${box}" aria-hidden="true">${icons[n]}</svg>`;
const chevD = '<svg class="h-2.5 w-3.5" viewBox="0 0 14 10" fill="none" stroke="currentColor" stroke-width="3"><path d="M1 1l6 7 6-7"/></svg>';
const chevR = '<svg class="h-3.5 w-2.5" viewBox="0 0 10 14" fill="none" stroke="currentColor" stroke-width="3"><path d="M2 1l6 6-6 6"/></svg>';
const $ = id => document.getElementById(id);

/* toolbar entries: [icon, label, flags]; flags: a = pressed, d = drop-down, x = disabled */
const grip = '<div class="h-7 w-0.5 self-center bg-[#a8a8a8]"></div>';
const toolbar = list => grip + '<div class="w-[5px]"></div>' + list.map(t => {
  if (t === '|') return '<div class="flex w-[18px] justify-center self-center"><div class="h-11 w-0.5 bg-[#cfcfcf]"></div></div>';
  if (t === 'win3d') return `<div class="flex w-[21px] justify-center self-center"><div class="h-7 w-0.5 bg-[#a8a8a8]"></div></div><button aria-pressed="true" class="flex h-[57px] w-[194px] items-center justify-center gap-1.5 rounded-[10px] bg-[#bebdc3] text-black shadow-[0_1px_2px_rgba(0,0,0,0.25)]">${svg('win3d')}<span class="pt-2">3D-Fenster</span></button>`;
  const [n, label, f = ''] = t, on = f.includes('a');
  return `<button aria-label="${label}" ${f.includes('x') ? 'disabled' : ''} class="${on ? 'flex h-[57px] w-14 items-center justify-center rounded-[10px] bg-[#bebdc3] text-[#263238] shadow-[0_1px_2px_rgba(0,0,0,0.25)]' : 'flex h-[57px] w-14 items-center justify-center rounded-[10px] text-[#263238]'}">${svg(n)}</button>` +
    (f.includes('d') ? `<button aria-label="${label}: Optionen" class="${on ? 'flex h-[57px] w-[26px] items-center justify-center rounded-lg bg-[#bebdc3] shadow-[0_1px_2px_rgba(0,0,0,0.25)]' : 'flex h-[57px] w-[26px] items-center justify-center rounded-lg'}">${chevD}</button>` : '');
}).join('');
$('bar-main').innerHTML = toolbar([
  ['home', 'Start'], '|', ['save', 'Sichern'], '|', ['undo', 'Widerrufen'], ['redo', 'Wiederholen', 'x'], '|',
  ['find', 'Suchen & Aktivieren'], ['dropper', 'Parameter aufnehmen'], ['syringe', 'Parameter übertragen'], ['hammer', 'Bearbeiten', 'x'], '|',
  ['snap', 'Fangpunkte'], ['ruler12', 'Messen'], ['setsq', 'Hilfslinien', 'ad'], ['guide', 'Fanghilfen', 'ad'], ['track', 'Tracker', 'ad'],
  ['grid', 'Raster', 'd'], ['skew', 'Bearbeitungsebene', 'd'], ['measure', 'Maße', 'd'], ['stamp', 'Schwerkraft', 'd'], ['ref', 'Transparentpause', 'd'],
  ['cut3d', '3D-Schnitt', 'd'], ['group', 'Gruppieren', 'd'], '|',
  ['star', 'Favoriten'], ['hoods', 'Modelldarstellung'], ['elev', 'Umbau'], ['marker', 'Marker'], ['cloud', 'Änderungen'], ['flag', 'Issues'], ['tag', 'Etiketten'],
  ['penset', 'Attribute', 'd'], ['north', 'Norden', 'd'], '|',
  ['scissor', 'Trennen'], ['axe', 'Trimmen'], ['lift', 'Anheben', 'x'], ['resize', 'Größe ändern', 'x'], ['stretch', 'Strecken', 'x'], ['corner', 'Verschneiden', 'x'], ['fillet', 'Abrunden', 'x'], ['roof', 'Dach trimmen', 'x']]);
$('bar-3d').innerHTML = toolbar([
  ['move', 'Bewegen', 'd'], ['rotate', 'Drehen', 'd'], ['scale', 'Skalieren', 'd'], ['copies', 'Vervielfältigen', 'x'], 'win3d', '|',
  ['persp', 'Perspektive', 'a'], ['axon', 'Axonometrie'], ['axes', 'Ansichtsrichtung', 'd'], '|', ['walk', 'Durchwandern'], ['orbit', 'Orbit'], '|',
  ['compass', 'Blick auf'], ['fit', 'Einpassen'], ['tripod', 'Kamera'], ['fly', 'Blick drehen'], ['clip', 'Horizont', 'x'], '|',
  ['boxlist', '3D-Stile', 'd'], '|', ['structs', 'Auswahl in 3D', 'd'], ['filter', 'Filter'], ['cut3d', '3D-Schnitt', 'd'], '|',
  ['brush', 'Oberfläche'], ['brushdrop', 'Oberfläche aufnehmen'], '|', ['camera', 'Rendern', 'd'], ['camlist', 'Render-Einstellungen', 'a'], ['housedash', 'Ausschnitt'], '|',
  ['video', 'Animation'], ['sun', 'Sonnenstudie']]);

$('bar-info').innerHTML = '<div class="mb-2.5 h-[33px] w-0.5 bg-[#a8a8a8]"></div><div class="w-[3px]"></div>' +
  [['drag', 'Ziehmodus'], ['boxsel', 'Auswahlmodus']].map(([n, l]) => `<button aria-label="${l}" class="flex h-[38px] w-20 items-center justify-center gap-4 rounded-lg bg-white shadow-[0_1px_2px_rgba(0,0,0,0.35)]">${svg(n, '0 0 36 36', 'size-8')}${chevR}</button>`).join('') +
  `<button aria-label="Magnet" aria-pressed="true" class="flex h-[38px] w-20 items-center justify-center rounded-lg bg-[#bebdc3] shadow-[0_1px_2px_rgba(0,0,0,0.25)]">${svg('magnet', '0 0 36 36', 'size-8')}</button>` +
  `<button aria-label="Pfeil-Werkzeug" class="flex h-[58px] w-24 items-center justify-center gap-6 rounded-lg bg-white pl-1 shadow-[0_1px_2px_rgba(0,0,0,0.35)]">${svg('arrow')}${chevR}</button>`;

/* toolbox */
const tool = cls => ([n, label, more]) => `<button class="${cls}"><svg class="h-12 w-[60px] shrink-0 overflow-visible" viewBox="0 0 60 48">${icons[n]}</svg><span class="flex-1 text-left whitespace-nowrap">${label}</span>${more ? `<span class="pr-1.5">${chevR}</span>` : ''}</button>`;
const row = tool('mx-0.5 flex h-14 w-[308px] items-center gap-4 pl-3.5 text-black');
$('tools-select').innerHTML = tool('mx-0.5 mb-px flex h-[54px] w-[308px] items-center gap-4 rounded-[10px] bg-[#bebdc3] pl-3.5 text-black shadow-[0_1px_2px_rgba(0,0,0,0.25)]')(['tArrow', 'Pfeil']) + row(['tFrame', 'Markierungsrahmen']);
$('tools-plan').innerHTML = [['wall', 'Wand'], ['door', 'Tür'], ['window', 'Fenster'], ['slab', 'Decke'], ['column', 'Stütze'], ['beam', 'Träger'], ['roofT', 'Dach'], ['shell', 'Schale'], ['skylight', 'Dachfenster'], ['facade', 'Fassade'], ['stair', 'Treppe'], ['rail', 'Geländer'], ['chair', 'Objekt'], ['bulb', 'Lichtquelle'], ['wallend', 'Wandabschluss'], ['morph', 'Morph'], ['mesh', 'Freifläche'], ['opening', 'Öffnung'], ['room', 'Raum', 1]].map(row).join('');
$('tools-doc').innerHTML = [['dim', 'Bemaßung'], ['level', 'Höhenbemaßung'], ['radial', 'Radialbemaßung'], ['angle', 'Winkelbemaßung'], ['labelT', 'Etikett'], ['textT', 'Text'], ['change', 'Änderung']].map(tool('ml-0.5 flex h-14 w-full items-center gap-4 pl-3.5 text-[#7d8082]')).join('');

/* tabs */
$('tabs').innerHTML = [['storey', '0. EG [0. EG]', 'text-[#447ff7]', 0, 0], ['persp', 'Allgemeine Perspektive [3D / Alle]', 'text-[#447ff7]', 1, 0], ['camera', '[Bild2]', 'text-[#263238]', 0, 1], ['camera', '[Bild1]', 'text-[#263238]', 0, 0]]
  .map(([n, l, c, on, b]) => `<button role="tab" aria-selected="${!!on}" class="${on ? 'flex flex-1 items-center justify-center gap-1.5 bg-white' : b ? 'flex flex-1 items-center justify-center gap-1.5 border-r-2 border-[#adadad] pr-1' : 'flex flex-1 items-center justify-center gap-1.5 pr-1'}"><span class="${c}">${svg(n)}</span>${l}</button>`).join('');
$('tab-menu').innerHTML = `<svg class="h-8 w-11" viewBox="0 0 44 32" fill="none" stroke="#263238" stroke-width="2"><path d="M1 13L11 5l8 8v11H1zM11 5l13 4 5 7v8H19M19 13l9 2M32 18v11"/><path d="M36 21h6M36 28h6" stroke-width="5"/></svg>${chevD}`;

/* quick options */
const small = n => svg(n, '0 0 36 36', 'size-8 shrink-0');
$('quick').innerHTML =
  `<div class="flex w-[143px] items-center justify-between border-r-2 border-[#d0d0d0] pr-2 pl-1.5">${['zback', 'zfwd', 'zoom'].map(n => `<button aria-label="Zoom">${small(n)}</button>`).join('')}</div>` +
  `<div class="flex w-[103px] items-center justify-around border-r-2 border-[#d0d0d0]">${['spin', 'walk'].map(n => `<button aria-label="Navigieren">${svg(n, '0 0 36 36', 'size-7 shrink-0')}</button>`).join('')}</div>` +
  [['fitzoom', 'keine...', 1], ['orient', 'keine...', 1], ['ruler', '1:100'], ['layers', '00 Ar...'], ['hatch', 'Komp...'], ['pen', '04 S/...'], ['dimbox', '00 Ar...'], ['override', 'Weiß'], ['reno', '00 Re...'], ['hoods', 'Nur H...'], ['box3d', 'Schat...']]
    .map(([n, l, x], i) => `<button class="${i < 10 ? 'flex min-w-0 flex-1 items-center border-r-2 border-[#d0d0d0] pr-3.5 pl-3' : 'flex min-w-0 flex-1 items-center pr-2 pl-3'}"><span class="text-[#263238]">${small(n)}</span><span class="${x ? 'flex-1 pt-0.5 text-center whitespace-nowrap text-[#b2b2b2]' : 'flex-1 pt-0.5 text-center whitespace-nowrap'}">${l}</span><span class="${x ? 'pt-0.5 text-[#888]' : 'pt-0.5'}">${chevR}</span></button>`).join('');

/* navigator */
$('nav-head').innerHTML = `<button aria-label="Projekt-Mappe" class="flex w-14 justify-center">${svg('house3')}</button><div class="mr-2.5 ml-2 h-10 w-0.5 bg-[#cfcfcf]"></div>` +
  `<button aria-label="Ausschnitt-Mappe" aria-pressed="true" class="flex h-[57px] w-14 items-center justify-center rounded-[10px] bg-[#bebdc3] shadow-[0_1px_2px_rgba(0,0,0,0.25)]">${svg('viewmap')}</button>` +
  `<button aria-label="Layoutbuch" class="flex w-14 justify-center">${svg('layout')}</button><button aria-label="Publisher" class="flex w-14 justify-center">${svg('publish')}</button>` +
  `<button aria-label="Menü" class="ml-auto flex h-11 w-[66px] items-center justify-center gap-3 rounded-[10px] bg-white shadow-[0_1px_2px_rgba(0,0,0,0.35)]"><svg class="h-5 w-6" viewBox="0 0 24 20" stroke="#222" stroke-width="2"><path d="M0 1h24M0 10h24M0 19h24"/></svg>${chevR}</button>`;
const branch = { v: '<svg class="h-2.5 w-4" viewBox="0 0 16 10" fill="none" stroke="#808080" stroke-width="2.500"><path d="M1 1l7 8 7-8"/></svg>', r: '<svg class="h-4 w-2.5" viewBox="0 0 10 16" fill="none" stroke="#808080" stroke-width="2.500"><path d="M1 1l8 7-8 7"/></svg>', '': '' };
$('tree').innerHTML = [[0, 'v', 'viewmap', 'Ohne Titel'], [1, 'v', 'folder', 'Beispielausschnitte'], [2, 'v', 'folder', 'Arbeitseinstellung'], [3, 'v', 'storeyF', 'Geschosse'], [4, '', 'storey', '1. OG'], [4, '', 'storey', '0. EG'], [4, '', 'storey', '-1. UG'], [3, '', 'perspW', 'Allgemeine Perspektive'], [3, '', 'section', 'Ansichten'], [3, '', 'section', 'Schnitte'], [3, '', 'interior', 'Innenansichten'], [3, '', 'detail', 'Details'], [3, '', 'sheet', 'Arbeitsblätter'], [3, '', 'doc3d', '3D-Dokumente'], [3, 'r', 'perspF', '3D'], [2, 'r', 'folder', 'Vorentwurfsplanung'], [2, '', 'folder', '']]
  .map(([d, b, n, l], i) => `<div role="treeitem" class="${i === 7 ? 'flex h-12 items-center bg-[#dcdcdc] pl-1.5 font-bold' : 'flex h-12 items-center pl-1.5'}"><span style="width:${d * 28}px"></span><span class="flex w-5 justify-center">${branch[b]}</span><span class="mr-2 ml-3 w-9 text-[#447ff7]">${svg(n)}</span>${l}</div>`).join('');
const strip = list => list.map(([n, l]) => n ? `<button aria-label="${l}" class="flex w-[60px] justify-center">${svg(n)}</button>` : '<span class="w-[60px]"></span>').join('');
$('nav-tools').innerHTML = strip([['addview', 'Ausschnitt sichern'], ['addclone', 'Ordner klonen'], ['addfolder', 'Neuer Ordner'], ['settings', 'Einstellungen'], ['del', 'Löschen']]);
$('trace-tools').innerHTML = strip([['swap', 'Tauschen'], [''], ['tmove', 'Bewegen'], ['trot', 'Drehen'], ['trest', 'Zurücksetzen'], ['refresh', 'Aktualisieren']]);
$('trace-foot').innerHTML = strip([['hand', 'Verschieben'], ['overlap', 'Überlagern'], ['split', 'Teilen'], ['hatchoff', 'Schraffuren aus']]);
const pie = '<svg class="size-[26px]" viewBox="0 0 26 26" stroke="#8b9194" stroke-width="2"><path d="M13 13V1a12 12 0 0 0-10 18z" fill="#a4d3a4"/><path d="M13 13V1a12 12 0 0 1 10 18z" fill="#f3a293"/><path d="M13 13L3 19a12 12 0 0 0 20 0z" fill="#a3bdf8"/></svg>';
$('sliders').innerHTML = [['Transparentpause:', '<span class="size-6 bg-[#f19a8e]"></span>', 1], ['Aktiv:', pie, 0]].map(([l, s, more], i) =>
  `<label for="sl${i}" class="${i ? 'mt-1.5 flex h-9 items-center pl-1 text-[#7b7b7b]' : 'flex h-9 items-center pl-1 text-[#7b7b7b]'}">${l}</label>
   <div class="mx-1.5 mt-[7px] flex h-[57px]">
    <button disabled aria-label="Farbe" class="flex w-14 items-center gap-2 rounded-[10px] bg-[#f5f5f5] pl-1.5 text-[#999] shadow-[0_1px_2px_rgba(0,0,0,0.2)]">${s}${chevR}</button>
    <div class="mr-1.5 ml-[9px] grid flex-1 items-center pb-2.5">
      <div class="col-start-1 row-start-1 mr-1.5 flex h-4 justify-between">${'<span class="w-1 bg-[#dedede]"></span>'.repeat(11)}</div>
      <input id="sl${i}" type="range" disabled min="0" max="10" value="10" class="col-start-1 row-start-1 h-2 w-full appearance-none rounded-full bg-[#dedede]/60 [&::-webkit-slider-thumb]:h-8 [&::-webkit-slider-thumb]:w-4 [&::-webkit-slider-thumb]:appearance-none [&::-webkit-slider-thumb]:rounded-full [&::-webkit-slider-thumb]:bg-[#f6f6f6] [&::-webkit-slider-thumb]:shadow-[0_1px_2px_rgba(0,0,0,0.3)]">
    </div>
    ${more ? `<button disabled aria-label="Mehr" class="flex w-[26px] items-center justify-center rounded-lg bg-[#f5f5f5] text-[#999] shadow-[0_1px_2px_rgba(0,0,0,0.2)]">${chevR}</button>` : '<span class="w-[26px]"></span>'}
   </div>`).join('');

document.querySelectorAll('[data-icon]').forEach(e => e.innerHTML = svg(e.dataset.icon));
document.querySelectorAll('[data-chev]').forEach(e => e.innerHTML = chevR);
document.querySelectorAll('[data-handle]').forEach(e => e.innerHTML = (e.dataset.handle === 'h' ? '<span class="h-0.5 w-2.5 bg-[#e9893c]"></span>' : '<span class="h-2.5 w-0.5 bg-[#e9893c]"></span>').repeat(4));
</script>
</body>
</html>
